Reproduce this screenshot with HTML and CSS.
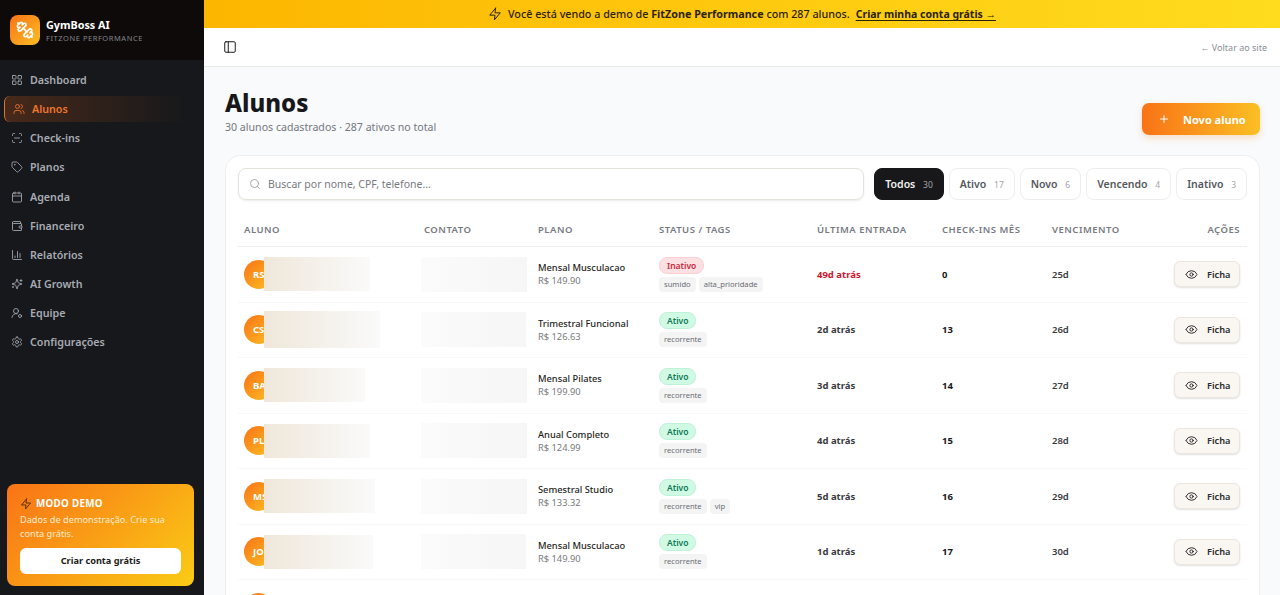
FILE: index.html
```html
<!DOCTYPE html>
<html lang="pt-BR">
<head>
  <meta charset="UTF-8">
  <meta name="viewport" content="width=device-width, initial-scale=1.0">
  <title>Alunos - GymBoss AI</title>
  <link rel="stylesheet" href="styles.css">
</head>
<body>
  <!-- icon sprite -->
  <svg class="sprite" xmlns="http://www.w3.org/2000/svg">
    <symbol id="i-grid" viewBox="0 0 24 24"><rect x="3" y="3" width="7" height="7" rx="1"/><rect x="14" y="3" width="7" height="7" rx="1"/><rect x="14" y="14" width="7" height="7" rx="1"/><rect x="3" y="14" width="7" height="7" rx="1"/></symbol>
    <symbol id="i-users" viewBox="0 0 24 24"><path d="M16 21v-2a4 4 0 0 0-4-4H6a4 4 0 0 0-4 4v2"/><circle cx="9" cy="7" r="4"/><path d="M22 21v-2a4 4 0 0 0-3-3.87"/><path d="M16 3.13a4 4 0 0 1 0 7.75"/></symbol>
    <symbol id="i-scan" viewBox="0 0 24 24"><path d="M3 7V5a2 2 0 0 1 2-2h2"/><path d="M17 3h2a2 2 0 0 1 2 2v2"/><path d="M21 17v2a2 2 0 0 1-2 2h-2"/><path d="M7 21H5a2 2 0 0 1-2-2v-2"/><path d="M7 12h10"/></symbol>
    <symbol id="i-tag" viewBox="0 0 24 24"><path d="M12.586 2.586A2 2 0 0 0 11.172 2H4a2 2 0 0 0-2 2v7.172a2 2 0 0 0 .586 1.414l8.704 8.704a2.426 2.426 0 0 0 3.42 0l6.58-6.58a2.426 2.426 0 0 0 0-3.42z"/><circle cx="7.5" cy="7.5" r=".5"/></symbol>
    <symbol id="i-calendar" viewBox="0 0 24 24"><path d="M8 2v4"/><path d="M16 2v4"/><rect x="3" y="4" width="18" height="18" rx="2"/><path d="M3 10h18"/></symbol>
    <symbol id="i-wallet" viewBox="0 0 24 24"><path d="M19 7V4a1 1 0 0 0-1-1H5a2 2 0 0 0 0 4h15a1 1 0 0 1 1 1v4h-3a2 2 0 0 0 0 4h3a1 1 0 0 0 1-1v-2a1 1 0 0 0-1-1"/><path d="M3 5v14a2 2 0 0 0 2 2h15a1 1 0 0 0 1-1v-4"/></symbol>
    <symbol id="i-chart" viewBox="0 0 24 24"><path d="M3 3v16a2 2 0 0 0 2 2h16"/><path d="M18 17V9"/><path d="M13 17V5"/><path d="M8 17v-3"/></symbol>
    <symbol id="i-sparkles" viewBox="0 0 24 24"><path d="M9.937 15.5A2 2 0 0 0 8.5 14.063l-6.135-1.582a.5.5 0 0 1 0-.962L8.5 9.936A2 2 0 0 0 9.937 8.5l1.582-6.135a.5.5 0 0 1 .963 0L14.063 8.5A2 2 0 0 0 15.5 9.937l6.135 1.581a.5.5 0 0 1 0 .964L15.5 14.063a2 2 0 0 0-1.437 1.437l-1.582 6.135a.5.5 0 0 1-.963 0z"/><path d="M20 3v4"/><path d="M22 5h-4"/><path d="M4 17v2"/><path d="M5 18H3"/></symbol>
    <symbol id="i-usercog" viewBox="0 0 24 24"><path d="M2 21a8 8 0 0 1 10.4-7.6"/><circle cx="10" cy="8" r="5"/><circle cx="18" cy="18" r="3"/></symbol>
    <symbol id="i-gear" viewBox="0 0 24 24"><path d="M12.22 2h-.44a2 2 0 0 0-2 2v.18a2 2 0 0 1-1 1.73l-.43.25a2 2 0 0 1-2 0l-.15-.08a2 2 0 0 0-2.73.73l-.22.38a2 2 0 0 0 .73 2.73l.15.1a2 2 0 0 1 1 1.72v.51a2 2 0 0 1-1 1.74l-.15.09a2 2 0 0 0-.73 2.73l.22.38a2 2 0 0 0 2.73.73l.15-.08a2 2 0 0 1 2 0l.43.25a2 2 0 0 1 1 1.73V20a2 2 0 0 0 2 2h.44a2 2 0 0 0 2-2v-.18a2 2 0 0 1 1-1.73l.43-.25a2 2 0 0 1 2 0l.15.08a2 2 0 0 0 2.73-.73l.22-.39a2 2 0 0 0-.73-2.73l-.15-.08a2 2 0 0 1-1-1.74v-.5a2 2 0 0 1 1-1.74l.15-.09a2 2 0 0 0 .73-2.73l-.22-.38a2 2 0 0 0-2.73-.73l-.15.08a2 2 0 0 1-2 0l-.43-.25a2 2 0 0 1-1-1.73V4a2 2 0 0 0-2-2z"/><circle cx="12" cy="12" r="3"/></symbol>
    <symbol id="i-zap" viewBox="0 0 24 24"><path d="M13 2 3 14h9l-1 8 10-12h-9l1-8z"/></symbol>
    <symbol id="i-panel" viewBox="0 0 24 24"><rect x="3" y="3" width="18" height="18" rx="2"/><path d="M9 3v18"/></symbol>
    <symbol id="i-search" viewBox="0 0 24 24"><circle cx="11" cy="11" r="8"/><path d="m21 21-4.3-4.3"/></symbol>
    <symbol id="i-eye" viewBox="0 0 24 24"><path d="M2.062 12.348a1 1 0 0 1 0-.696 10.75 10.75 0 0 1 19.876 0 1 1 0 0 1 0 .696 10.75 10.75 0 0 1-19.876 0"/><circle cx="12" cy="12" r="3"/></symbol>
    <symbol id="i-plus" viewBox="0 0 24 24"><path d="M5 12h14"/><path d="M12 5v14"/></symbol>
    <symbol id="i-dumbbell" viewBox="0 0 24 24"><path d="M14.4 14.4 9.6 9.6"/><path d="M18.657 21.485a2 2 0 1 1-2.829-2.828l-1.767 1.768a2 2 0 1 1-2.829-2.829l6.364-6.364a2 2 0 1 1 2.829 2.829l-1.768 1.767a2 2 0 1 1 2.828 2.829z"/><path d="m21.5 21.5-1.4-1.4"/><path d="M3.9 3.9 2.5 2.5"/><path d="M6.404 12.768a2 2 0 1 1-2.829-2.829l1.768-1.767a2 2 0 1 1-2.828-2.829l2.828-2.828a2 2 0 1 1 2.829 2.828l1.767-1.768a2 2 0 1 1 2.829 2.829z"/></symbol>
  </svg>

  <aside class="sidebar">
    <div class="brand">
      <div class="logo"><svg class="ico"><use href="#i-dumbbell"/></svg></div>
      <div>
        <div class="brand-name">GymBoss AI</div>
        <div class="brand-sub">FITZONE PERFORMANCE</div>
      </div>
    </div>

    <nav class="menu">
      <a class="item"><svg class="ico"><use href="#i-grid"/></svg>Dashboard</a>
      <a class="item active"><svg class="ico"><use href="#i-users"/></svg>Alunos</a>
      <a class="item"><svg class="ico"><use href="#i-scan"/></svg>Check-ins</a>
      <a class="item"><svg class="ico"><use href="#i-tag"/></svg>Planos</a>
      <a class="item"><svg class="ico"><use href="#i-calendar"/></svg>Agenda</a>
      <a class="item"><svg class="ico"><use href="#i-wallet"/></svg>Financeiro</a>
      <a class="item"><svg class="ico"><use href="#i-chart"/></svg>Relatórios</a>
      <a class="item"><svg class="ico"><use href="#i-sparkles"/></svg>AI Growth</a>
      <a class="item"><svg class="ico"><use href="#i-usercog"/></svg>Equipe</a>
      <a class="item"><svg class="ico"><use href="#i-gear"/></svg>Configurações</a>
    </nav>

    <div class="demo">
      <div class="demo-title"><svg class="ico"><use href="#i-zap"/></svg>MODO DEMO</div>
      <p class="demo-text">Dados de demonstração. Crie sua conta grátis.</p>
      <button class="demo-btn">Criar conta grátis</button>
    </div>
  </aside>

  <div class="main">
    <div class="banner">
      <svg class="ico"><use href="#i-zap"/></svg>
      <span>Você está vendo a demo de <b>FitZone Performance</b> com 287 alunos.</span>
      <a class="banner-link">Criar minha conta grátis →</a>
    </div>

    <div class="topbar">
      <svg class="ico"><use href="#i-panel"/></svg>
      <a class="back">← Voltar ao site</a>
    </div>

    <main class="content">
      <div class="page-head">
        <div>
          <h1>Alunos</h1>
          <p class="sub">30 alunos cadastrados · 287 ativos no total</p>
        </div>
        <button class="new-btn"><svg class="ico"><use href="#i-plus"/></svg>Novo aluno</button>
      </div>

      <section class="card">
        <div class="tools">
          <div class="search"><svg class="ico"><use href="#i-search"/></svg><span>Buscar por nome, CPF, telefone...</span></div>
          <button class="chip on">Todos <i>30</i></button>
          <button class="chip">Ativo <i>17</i></button>
          <button class="chip">Novo <i>6</i></button>
          <button class="chip">Vencendo <i>4</i></button>
          <button class="chip">Inativo <i>3</i></button>
        </div>

        <div class="row head">
          <div>Aluno</div><div>Contato</div><div>Plano</div><div>Status / Tags</div><div>Última entrada</div><div>Check-ins mês</div><div>Vencimento</div><div class="right">Ações</div>
        </div>

        <div class="row">
          <div class="who"><span class="avatar">RS</span><span class="hide name n1"></span></div>
          <div><span class="hide contact c1"></span></div>
          <div><div class="plan">Mensal Musculacao</div><div class="price">R$ 149.90</div></div>
          <div><span class="pill red">Inativo</span><div class="tags"><span>sumido</span><span>alta_prioridade</span></div></div>
          <div class="last late">49d atrás</div>
          <div class="num">0</div>
          <div class="due">25d</div>
          <div class="right"><button class="ficha"><svg class="ico"><use href="#i-eye"/></svg>Ficha</button></div>
        </div>

        <div class="row">
          <div class="who"><span class="avatar">CS</span><span class="hide name n2"></span></div>
          <div><span class="hide contact c2"></span></div>
          <div><div class="plan">Trimestral Funcional</div><div class="price">R$ 126.63</div></div>
          <div><span class="pill green">Ativo</span><div class="tags"><span>recorrente</span></div></div>
          <div class="last">2d atrás</div>
          <div class="num">13</div>
          <div class="due">26d</div>
          <div class="right"><button class="ficha"><svg class="ico"><use href="#i-eye"/></svg>Ficha</button></div>
        </div>

        <div class="row">
          <div class="who"><span class="avatar">BA</span><span class="hide name n3"></span></div>
          <div><span class="hide contact c1"></span></div>
          <div><div class="plan">Mensal Pilates</div><div class="price">R$ 199.90</div></div>
          <div><span class="pill green">Ativo</span><div class="tags"><span>recorrente</span></div></div>
          <div class="last">3d atrás</div>
          <div class="num">14</div>
          <div class="due">27d</div>
          <div class="right"><button class="ficha"><svg class="ico"><use href="#i-eye"/></svg>Ficha</button></div>
        </div>

        <div class="row">
          <div class="who"><span class="avatar">PL</span><span class="hide name n1"></span></div>
          <div><span class="hide contact c1"></span></div>
          <div><div class="plan">Anual Completo</div><div class="price">R$ 124.99</div></div>
          <div><span class="pill green">Ativo</span><div class="tags"><span>recorrente</span></div></div>
          <div class="last">4d atrás</div>
          <div class="num">15</div>
          <div class="due">28d</div>
          <div class="right"><button class="ficha"><svg class="ico"><use href="#i-eye"/></svg>Ficha</button></div>
        </div>

        <div class="row">
          <div class="who"><span class="avatar">MS</span><span class="hide name n4"></span></div>
          <div><span class="hide contact c1"></span></div>
          <div><div class="plan">Semestral Studio</div><div class="price">R$ 133.32</div></div>
          <div><span class="pill green">Ativo</span><div class="tags"><span>recorrente</span><span>vip</span></div></div>
          <div class="last">5d atrás</div>
          <div class="num">16</div>
          <div class="due">29d</div>
          <div class="right"><button class="ficha"><svg class="ico"><use href="#i-eye"/></svg>Ficha</button></div>
        </div>

        <div class="row">
          <div class="who"><span class="avatar">JO</span><span class="hide name n5"></span></div>
          <div><span class="hide contact c2"></span></div>
          <div><div class="plan">Mensal Musculacao</div><div class="price">R$ 149.90</div></div>
          <div><span class="pill green">Ativo</span><div class="tags"><span>recorrente</span></div></div>
          <div class="last">1d atrás</div>
          <div class="num">17</div>
          <div class="due">30d</div>
          <div class="right"><button class="ficha"><svg class="ico"><use href="#i-eye"/></svg>Ficha</button></div>
        </div>

        <div class="row">
          <div class="who"><span class="avatar"></span></div>
          <div></div>
          <div></div>
          <div><span class="pill green stub"></span></div>
          <div></div><div></div><div></div><div></div>
        </div>
      </section>
    </main>
  </div>
</body>
</html>
```

FILE: styles.css
```css
/* GymBoss AI - alunos page */
* {
  box-sizing: border-box;
}

html, body {
  height: 595px;
  overflow: hidden;
}

body {
  margin: 0;
  display: flex;
  font-family: "Noto Sans", "Open Sans", sans-serif;
  color: #18181b;
  background: #f9fafb;
}

.sprite {
  display: none;
}

.ico {
  fill: none;
  stroke: currentColor;
  stroke-width: 2;
  stroke-linecap: round;
  stroke-linejoin: round;
  flex: none;
}

button {
  font-family: inherit;
  cursor: pointer;
}

/* sidebar */
.sidebar {
  width: 204px;
  flex: none;
  height: 595px;
  display: flex;
  flex-direction: column;
  background: #16181b;
}

.brand {
  height: 60px;
  flex: none;
  display: flex;
  align-items: center;
  gap: 6px;
  padding: 0 10px;
  background: #0e0a09;
}

.logo {
  width: 30px;
  height: 30px;
  border-radius: 8px;
  display: flex;
  align-items: center;
  justify-content: center;
  color: #fff;
  background: linear-gradient(135deg, #f97316, #fbbf24);
}

.logo .ico {
  width: 18px;
  height: 18px;
  stroke-width: 2.3;
}

.brand-name {
  color: #fff;
  font-size: 10.8px;
  font-weight: 700;
  line-height: 15px;
  margin-top: 1px;
}

.brand-sub {
  color: #83858a;
  font-size: 7.5px;
  letter-spacing: 0.55px;
  line-height: 11px;
  margin-top: 1px;
}

.menu {
  display: flex;
  flex-direction: column;
  gap: 3.15px;
  padding: 7px 4px 0;
}

.item {
  height: 26px;
  display: flex;
  align-items: center;
  gap: 7px;
  padding-left: 7px;
  border-radius: 6px;
  font-size: 10.7px;
  font-weight: 600;
  color: #a8abb3;
}

.item .ico {
  width: 12px;
  height: 12px;
  stroke-width: 1.7;
}

.item.active {
  padding-left: 8px;
  color: #f0762a;
  border-left: 1.5px solid #d9772f;
  background: linear-gradient(90deg, #47291a, #16181b 95%);
}

.demo {
  margin: auto 10px 9px 7px;
  height: 102px;
  padding: 13px 13px 0;
  border-radius: 8px;
  color: #fff;
  background: linear-gradient(135deg, #f97316, #facc15);
}

.demo-title {
  display: flex;
  align-items: center;
  gap: 4px;
  font-size: 9.8px;
  font-weight: 700;
  letter-spacing: 0.3px;
  line-height: 14px;
}

.demo-title .ico {
  width: 12px;
  height: 12px;
  color: #5c3305;
}

.demo-text {
  margin: 2px 0 6px;
  font-size: 9.2px;
  line-height: 14px;
  color: #ffeccd;
}

.demo-btn {
  width: 100%;
  height: 26px;
  border: 0;
  border-radius: 6px;
  background: #fff;
  color: #1c1c20;
  font-size: 9.2px;
  font-weight: 700;
}

/* top */
.main {
  flex: 1;
  min-width: 0;
  height: 595px;
  display: flex;
  flex-direction: column;
}

.banner {
  height: 28px;
  flex: none;
  display: flex;
  align-items: center;
  justify-content: center;
  gap: 6px;
  font-size: 10.75px;
  font-weight: 500;
  color: #2b2208;
  background: linear-gradient(90deg, #fdb600, #ffdc1e);
}

.banner .ico {
  width: 14px;
  height: 14px;
  stroke-width: 1.7;
}

.banner b {
  font-weight: 700;
}

.banner-link {
  font-size: 10.5px;
  font-weight: 700;
  text-decoration: underline;
  text-underline-offset: 2px;
}

.topbar {
  height: 39px;
  flex: none;
  display: flex;
  align-items: center;
  justify-content: space-between;
  padding: 0 13px 0 19px;
  background: #fff;
  border-bottom: 1px solid #e8e9eb;
}

.topbar .ico {
  width: 14px;
  height: 14px;
  stroke-width: 1.7;
}

.back {
  font-size: 9px;
  color: #8b8f96;
}

/* page */
.content {
  flex: 1;
  min-height: 0;
  overflow: hidden;
  padding: 20px 20px 0 21px;
}

.page-head {
  display: flex;
  justify-content: space-between;
  align-items: flex-start;
  height: 68px;
}

h1 {
  margin: 0;
  font-size: 24px;
  font-weight: 800;
  line-height: 32px;
  color: #18181b;
}

.sub {
  margin: 1px 0 0;
  font-size: 10.6px;
  line-height: 14px;
  color: #74777e;
}

.new-btn {
  margin-top: 16px;
  width: 118px;
  height: 32px;
  display: flex;
  align-items: center;
  padding-left: 16px;
  gap: 13px;
  border: 0;
  border-radius: 7px;
  color: #fff;
  font-size: 11px;
  font-weight: 700;
  background: linear-gradient(90deg, #f97316, #fbbf24);
  box-shadow: 0 3px 7px rgba(249, 140, 30, 0.25);
}

.new-btn .ico {
  width: 12px;
  height: 12px;
}

.card {
  height: 460px;
  padding: 12px 12px 0;
  background: #fff;
  border: 1px solid #eeeeef;
  border-radius: 15px;
}

.tools {
  display: flex;
  gap: 5px;
  height: 32px;
  margin-bottom: 13px;
}

.search {
  width: 628px;
  margin-right: 5px;
  display: flex;
  align-items: center;
  gap: 7px;
  padding-left: 10px;
  border: 1px solid #e6e3dc;
  border-radius: 8px;
  font-size: 10.5px;
  color: #777a80;
  box-shadow: 0 1px 2px rgba(0, 0, 0, 0.08);
}

.search .ico {
  width: 12px;
  height: 12px;
  color: #999;
  stroke-width: 1.7;
}

.chip {
  height: 32px;
  padding: 0 10px;
  border: 1px solid #eeeeee;
  border-radius: 8px;
  background: #fff;
  color: #55585e;
  font-size: 10.5px;
  font-weight: 600;
  white-space: nowrap;
}

.chip i {
  font-style: normal;
  font-weight: 400;
  font-size: 8.5px;
  color: #a2a5aa;
  margin-left: 5px;
}

.chip.on {
  background: #18181b;
  border-color: #18181b;
  color: #f2f2f2;
}

/* table rows */
.row {
  display: grid;
  grid-template-columns: 180px 114px 121px 158px 125px 110px 88px 100px;
  align-items: center;
  height: 55.5px;
  padding: 0 7px 0 6px;
  border-bottom: 1px solid #f7f7f8;
  font-size: 9.5px;
}

.row.head {
  height: 34px;
  padding-bottom: 0;
  border-bottom: 1px solid #eceef0;
  font-size: 9.5px;
  font-weight: 600;
  letter-spacing: 0.5px;
  text-transform: uppercase;
  color: #777a82;
}

.right {
  display: flex;
  justify-content: flex-end;
}

.who {
  display: flex;
  align-items: center;
}

.avatar {
  width: 29px;
  height: 29px;
  flex: none;
  display: flex;
  align-items: center;
  padding-left: 9px;
  border-radius: 50%;
  color: #fff;
  font-size: 9.5px;
  font-weight: 700;
  background: linear-gradient(135deg, #f97316, #fbbf24);
}

/* blurred personal data */
.hide {
  display: block;
  height: 34px;
}

.name {
  margin-left: -9px;
  background: linear-gradient(90deg, #efe7da, #fafafa);
}

.contact {
  margin-left: -3px;
  height: 35px;
  background: linear-gradient(90deg, #fbfbfb, #f6f6f7);
}

.n1 { width: 106px; }
.n2 { width: 116px; height: 37px; }
.n3 { width: 101px; }
.n4 { width: 111px; }
.n5 { width: 109px; }
.c1 { width: 106px; }
.c2 { width: 105px; }

.plan {
  font-weight: 500;
  font-size: 9.3px;
  line-height: 13px;
  color: #1f1f23;
}

.price {
  font-size: 9.3px;
  line-height: 13px;
  color: #777a80;
}

.pill {
  display: inline-block;
  height: 17px;
  border-radius: 8px;
  font-size: 8.5px;
  font-weight: 600;
  line-height: 15px;
}

.pill.red {
  padding: 0 7px;
  background: #fde0e2;
  border: 1px solid #fbd0d4;
  color: #c8283c;
}

.pill.green {
  padding: 0 7px;
  background: #d1fae5;
  border: 1px solid #bff2d9;
  color: #0d7a55;
}

.pill.stub {
  display: block;
  width: 38px;
}

.tags {
  display: flex;
  gap: 3px;
  margin-top: 3px;
}

.tags span {
  height: 15px;
  padding: 0 5px;
  border-radius: 4px;
  background: #f4f4f5;
  color: #6a6d73;
  font-size: 7.6px;
  line-height: 15px;
}

.last {
  font-weight: 700;
  font-size: 9.5px;
  color: #3a3b40;
}

.last.late {
  color: #d0142c;
}

.num {
  font-weight: 700;
  color: #18181b;
}

.due {
  font-weight: 600;
  color: #3a3b40;
}

.ficha {
  width: 66px;
  height: 26px;
  display: flex;
  align-items: center;
  padding-left: 10px;
  gap: 9px;
  border: 1px solid #ece6dd;
  border-radius: 6px;
  background: #faf6f1;
  color: #2b2b2f;
  font-size: 9.2px;
  font-weight: 600;
  box-shadow: 0 1px 2px rgba(0, 0, 0, 0.12);
}

.ficha .ico {
  width: 13px;
  height: 13px;
  stroke-width: 1.8;
}
```
